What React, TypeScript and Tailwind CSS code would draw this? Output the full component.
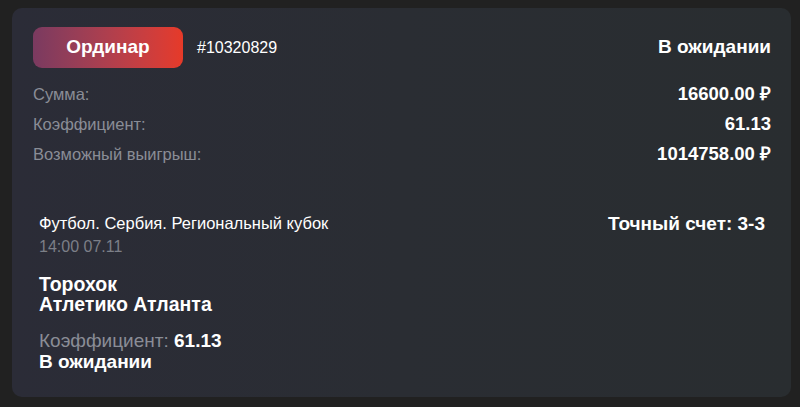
import React from 'react';

const rows = [
  { label: 'Сумма:', value: '16600.00 ₽' },
  { label: 'Коэффициент:', value: '61.13' },
  { label: 'Возможный выигрыш:', value: '1014758.00 ₽' },
];

export default function App() {
  return (
    <div
      className="w-full h-[407px] bg-[#212121] pt-2 pl-3 pr-[9px] text-white"
      style={{ fontFamily: '"Liberation Sans", Arial, sans-serif' }}
    >
      <div className="h-[389px] rounded-[10px] bg-gradient-to-r from-[#2b2c37] via-[#2a2d33] to-[#292d30] pt-[19px] pl-[21px] pr-[20px]">
        {/* header */}
        <div className="flex h-[41px] items-center">
          <div className="flex h-[41px] w-[150px] items-center justify-center rounded-[9px] bg-gradient-to-r from-[#7a3a60] to-[#e63a28] text-[19px] font-bold">
            Ординар
          </div>
          <span className="ml-[14px] text-[16px]">#10320829</span>
          <span className="ml-auto text-[19px] font-bold">В ожидании</span>
        </div>

        {/* summary */}
        <div className="mt-[11px]">
          {rows.map((r) => (
            <div key={r.label} className="flex h-[30px] items-center justify-between">
              <span className="text-[16.5px] text-[#8a8d96]">{r.label}</span>
              <span className="text-[18.5px] font-bold">{r.value}</span>
            </div>
          ))}
        </div>

        {/* event */}
        <div className="mt-[44px] px-[6px]">
          <div className="flex justify-between">
            <div>
              <div className="text-[16.5px] leading-[20px]">Футбол. Сербия. Региональный кубок</div>
              <div className="mt-1 text-[16px] leading-[20px] text-[#7c7f87]">14:00 07.11</div>
            </div>
            <div className="text-[19px] font-bold leading-[22px]">Точный счет: 3-3</div>
          </div>

          <div className="mt-[17px] text-[19.5px] font-bold leading-[20px]">
            <div>Торохок</div>
            <div>Атлетико Атланта</div>
          </div>

          <div className="mt-[16px] text-[19px] leading-[21px]">
            <div>
              <span className="text-[#8a8d96]">Коэффициент: </span>
              <span className="font-bold">61.13</span>
            </div>
            <div className="font-bold">В ожидании</div>
          </div>
        </div>
      </div>
    </div>
  );
}
